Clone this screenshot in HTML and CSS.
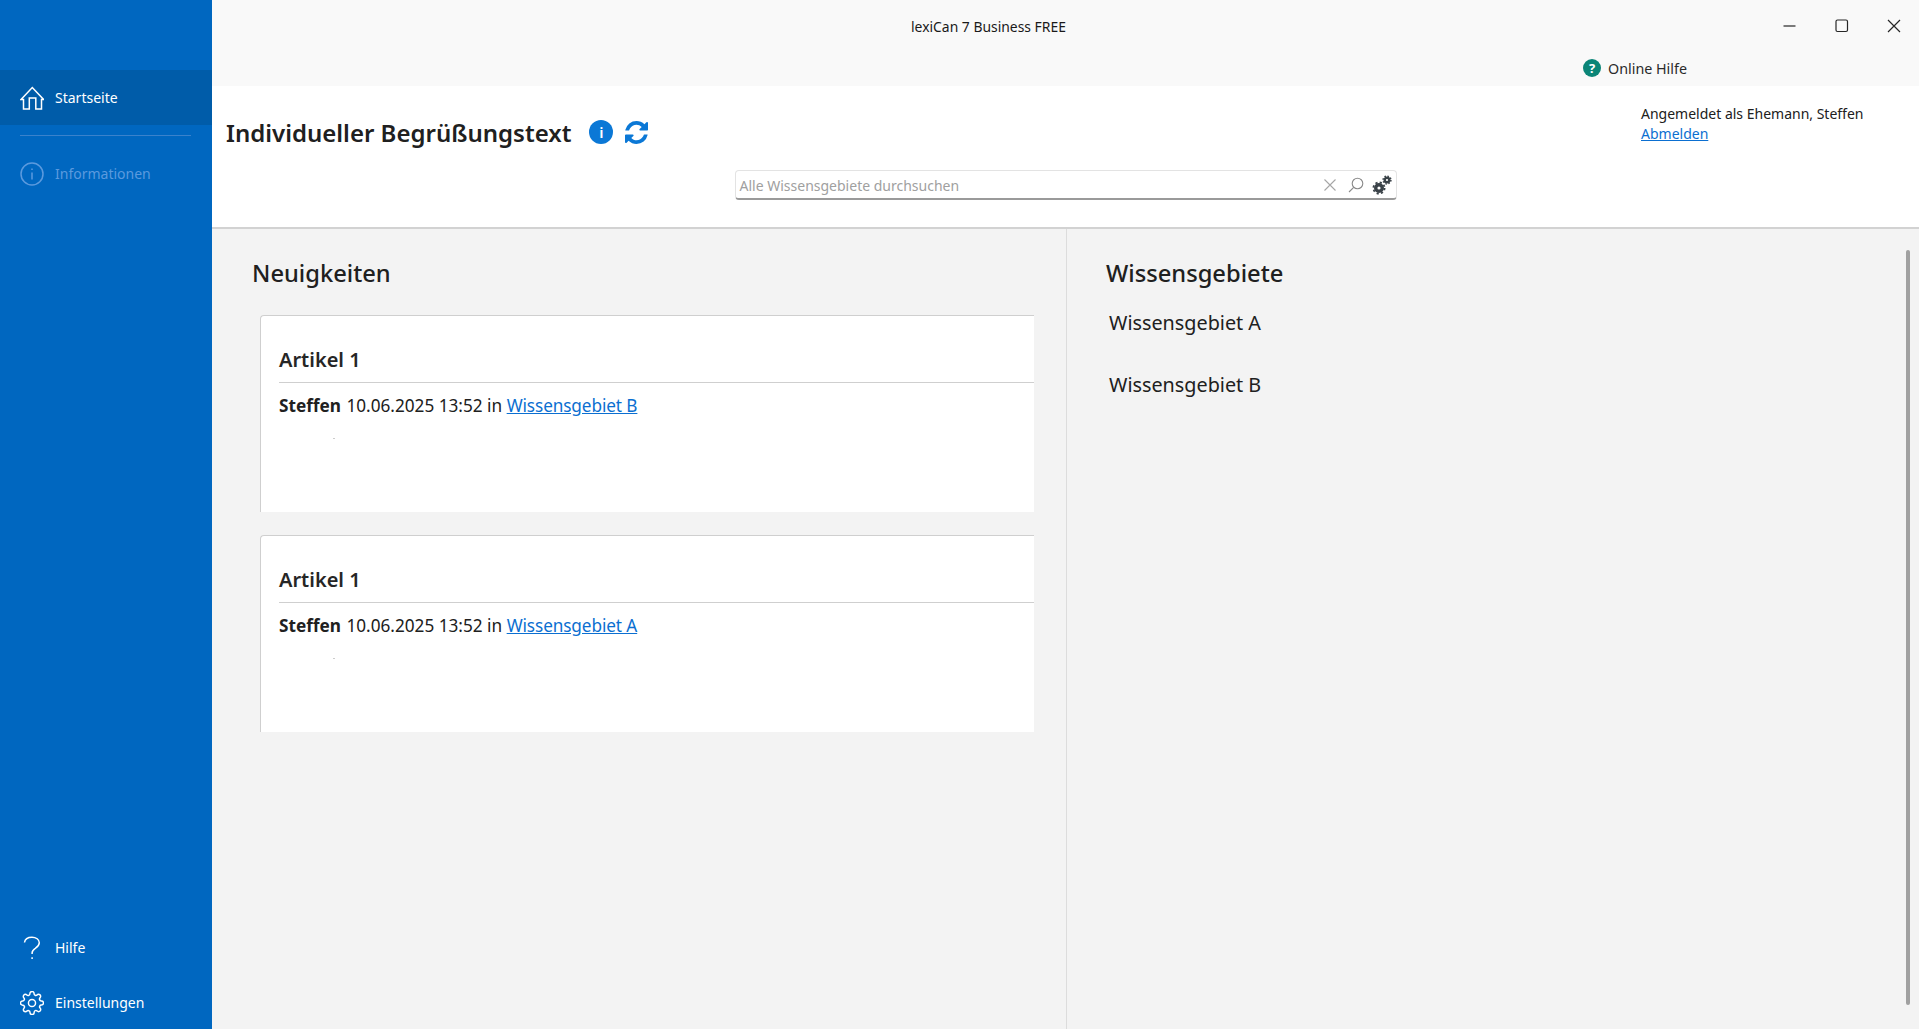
FILE: index.html
```html
<!DOCTYPE html>
<html lang="de">
<head>
<meta charset="utf-8">
<title>lexiCan 7 Business FREE</title>
<link rel="stylesheet" href="styles.css">
</head>
<body>
<div class="app">
  <aside class="sidebar">
    <nav class="nav-top">
      <a class="nav-item active">
        <svg class="nav-icon" viewBox="0 0 24 24"><path d="M1 13.500 12.300 1.500 23.600 13.500H21.500V23H15.800V12H9.300V23H3.500V13.500z"/></svg>
        <span>Startseite</span>
      </a>
      <div class="nav-divider"></div>
      <a class="nav-item disabled">
        <svg class="nav-icon" viewBox="0 0 24 24"><circle cx="12" cy="12" r="11"/><path d="M12 10.5v7M12 6.5v1.6"/></svg>
        <span>Informationen</span>
      </a>
    </nav>
    <nav class="nav-bottom">
      <a class="nav-item">
        <svg class="nav-icon" viewBox="0 0 24 24"><path d="M4.500 6.500C5 3 8 1.200 12 1.200c4 0 7.300 2.300 7.300 5.600 0 2.800-1.900 4.100-4 5.500-2.100 1.300-3.200 2.600-3.200 4.700v1"/><path d="M12.100 21.300v1.700"/></svg>
        <span>Hilfe</span>
      </a>
      <a class="nav-item">
        <svg class="nav-icon gear-icon" viewBox="0.500 0.500 23 23"><circle cx="12" cy="12" r="3.400"/><path d="M19.400 15a1.650 1.650 0 0 0 .33 1.820l.06.06a2 2 0 0 1 0 2.830 2 2 0 0 1-2.830 0l-.06-.06a1.650 1.650 0 0 0-1.820-.33 1.650 1.650 0 0 0-1 1.510V21a2 2 0 0 1-2 2 2 2 0 0 1-2-2v-.09A1.650 1.650 0 0 0 9 19.400a1.650 1.650 0 0 0-1.820.33l-.06.06a2 2 0 0 1-2.830 0 2 2 0 0 1 0-2.830l.06-.06a1.650 1.650 0 0 0 .33-1.820 1.650 1.650 0 0 0-1.510-1H3a2 2 0 0 1-2-2 2 2 0 0 1 2-2h.09A1.650 1.650 0 0 0 4.600 9a1.650 1.650 0 0 0-.33-1.820l-.06-.06a2 2 0 0 1 0-2.830 2 2 0 0 1 2.830 0l.06.06a1.650 1.650 0 0 0 1.820.33H9a1.650 1.650 0 0 0 1-1.510V3a2 2 0 0 1 2-2 2 2 0 0 1 2 2v.09a1.650 1.650 0 0 0 1 1.510 1.650 1.650 0 0 0 1.820-.33l.06-.06a2 2 0 0 1 2.830 0 2 2 0 0 1 0 2.830l-.06.06a1.650 1.650 0 0 0-.33 1.820V9a1.650 1.650 0 0 0 1.510 1H21a2 2 0 0 1 2 2 2 2 0 0 1-2 2h-.09a1.650 1.650 0 0 0-1.510 1z"/></svg>
        <span>Einstellungen</span>
      </a>
    </nav>
  </aside>
  <main class="main">
    <div class="titlebar">
      <div class="title-row">
        <div class="app-title">lexiCan 7 Business FREE</div>
        <div class="window-controls">
          <svg class="win-icon" viewBox="0 0 14 14"><path d="M0.500 7h12"/></svg>
          <svg class="win-icon" viewBox="0 0 14 14"><rect x="1" y="1" width="11.500" height="11.500" rx="1.500"/></svg>
          <svg class="win-icon" viewBox="0 0 14 14"><path d="M1 1l12 12M13 1 1 13"/></svg>
        </div>
      </div>
      <div class="help-row">
        <span class="help-badge">?</span>
        <span class="help-text">Online Hilfe</span>
      </div>
    </div>
    <header class="header">
      <div class="header-top">
        <div class="heading-group">
          <h1 class="page-title">Individueller Begrüßungstext</h1>
          <span class="info-badge">i</span>
          <svg class="refresh-icon" viewBox="0 0 1536 1536"><path d="M1511 928q0 5-1 7-64 268-268 434.500t-478 166.500q-146 0-282.500-55t-243.500-157l-129 129q-19 19-45 19t-45-19-19-45v-448q0-26 19-45t45-19h448q26 0 45 19t19 45-19 45l-137 137q71 66 161 102t187 36q134 0 250-65t186-179q11-17 53-117 8-23 30-23h192q13 0 22.500 9.500t9.500 22.500zm25-800v448q0 26-19 45t-45 19h-448q-26 0-45-19t-19-45 19-45l138-138q-148-137-349-137-134 0-250 65t-186 179q-11 17-53 117-8 23-30 23h-199q-13 0-22.500-9.500t-9.500-22.500v-7q65-268 270-434.500t480-166.500q146 0 284 55.500t245 156.500l130-129q19-19 45-19t45 19 19 45z"/></svg>
        </div>
        <div class="user-info">
          <div>Angemeldet als Ehemann, Steffen</div>
          <a class="link">Abmelden</a>
        </div>
      </div>
      <div class="search">
        <span class="search-placeholder">Alle Wissensgebiete durchsuchen</span>
        <svg class="search-clear" viewBox="0 0 14 14"><path d="M1.500 1.500l11 11M12.500 1.500l-11 11"/></svg>
        <svg class="search-glass" viewBox="0 0 16 16"><circle cx="9.500" cy="6.500" r="5.300"/><path d="M5.700 10.300 1 15"/></svg>
        <svg class="search-gears" viewBox="0 0 20 20">
          <circle class="gear-ring" cx="7" cy="13" r="3.300"/>
          <circle class="gear-teeth big" cx="7" cy="13" r="5.600"/>
          <circle class="gear-ring small" cx="15" cy="5" r="2.300"/>
          <circle class="gear-teeth little" cx="15" cy="5" r="3.900"/>
        </svg>
      </div>
    </header>
    <div class="content">
      <section class="news">
        <h2 class="section-title">Neuigkeiten</h2>
        <article class="card">
          <h3 class="card-title">Artikel 1</h3>
          <p class="card-meta"><strong>Steffen</strong> 10.06.2025 13:52 in <a class="link">Wissensgebiet B</a></p>
          <div class="speck"></div>
        </article>
        <article class="card">
          <h3 class="card-title">Artikel 1</h3>
          <p class="card-meta"><strong>Steffen</strong> 10.06.2025 13:52 in <a class="link">Wissensgebiet A</a></p>
          <div class="speck"></div>
        </article>
      </section>
      <section class="areas">
        <h2 class="section-title">Wissensgebiete</h2>
        <div class="area">Wissensgebiet A</div>
        <div class="area">Wissensgebiet B</div>
      </section>
      <div class="scrollbar"></div>
    </div>
  </main>
</div>
</body>
</html>
```
FILE: styles.css
```css
* { box-sizing: border-box; }
html, body { margin: 0; height: 100%; }
body {
  font-family: "Noto Sans", "Open Sans", sans-serif;
  color: #202020;
  overflow: hidden;
}
.app { display: flex; height: 1029px; }

.sidebar {
  width: 212px;
  flex: none;
  background: #0067c0;
  color: #fff;
  display: flex;
  flex-direction: column;
  justify-content: space-between;
  padding: 70px 0 0;
}
.nav-item {
  display: flex;
  align-items: center;
  gap: 11px;
  height: 55px;
  padding-left: 20px;
  font-size: 14px;
}
.nav-item.active { background: #005ca9; }
.nav-item.disabled { color: #5b9ade; margin-top: 10px; }
.nav-divider { height: 1px; margin: 10px 21px 0 20px; background: #3a82cc; }
.nav-icon {
  width: 24px; height: 24px; flex: none;
  fill: none; stroke: currentColor; stroke-width: 1.500;
}
.gear-icon { stroke-width: 1.400; }
.nav-bottom { display: flex; flex-direction: column; margin-bottom: -1px; }

.main { flex: 1; display: flex; flex-direction: column; min-width: 0; }

.titlebar { height: 86px; background: #f9f9f9; flex: none; }
.title-row { display: flex; height: 52px; }
.app-title {
  flex: 1;
  padding: 17px 0 0 699px;
  font-size: 13.9px;
  color: #1a1a1a;
}
.window-controls { display: flex; gap: 38px; padding: 19px 18px 0 0; }
.win-icon { width: 14px; height: 14px; fill: none; stroke: #262626; stroke-width: 1.200; }
.help-row {
  display: flex;
  align-items: center;
  gap: 7px;
  padding-left: 1371px;
  height: 34px;
  margin-top: -1px;
  font-size: 14.3px;
  color: #2a2a2a;
}
.help-badge {
  width: 18px; height: 18px; border-radius: 50%;
  background: #0b8577; color: #fff;
  font-size: 13px; font-weight: 700;
  display: flex; align-items: center; justify-content: center;
}

.header {
  height: 143px;
  flex: none;
  background: #fff;
  border-bottom: 2px solid #d2d2d2;
}
.header-top { display: flex; justify-content: space-between; height: 84px; }
.heading-group { display: flex; align-items: center; height: 84px; padding: 8px 0 0 14px; }
.page-title { margin: 0; font-size: 24px; font-weight: 600; color: #202020; }
.info-badge {
  width: 24px; height: 24px; border-radius: 50%;
  margin-left: 18px;
  background: #0b78d6; color: #fff;
  font-size: 15px; font-weight: 600;
  display: flex; align-items: center; justify-content: center;
}
.refresh-icon { width: 23px; height: 23px; margin-left: 12px; fill: #0b78d6; }
.user-info {
  width: 278px;
  padding-top: 18px;
  font-size: 14px;
  line-height: 20px;
  color: #202020;
}
.link { color: #0b6fd1; text-decoration: underline; }

.search {
  width: 662px;
  height: 30px;
  margin: 0 auto;
  display: flex;
  align-items: center;
  padding: 0 4px 0 4px;
  background: #fff;
  border: 1px solid #e3e3e3;
  border-bottom: 2px solid #9a9a9a;
  border-radius: 4px;
}
.search-placeholder { flex: 1; padding-top: 1px; font-size: 14px; color: #a0a0a0; }
.search-clear { width: 14px; height: 14px; fill: none; stroke: #a6a6a6; stroke-width: 1.100; }
.search-glass { width: 16px; height: 16px; margin-left: 11px; fill: none; stroke: #8a8a8a; stroke-width: 1.100; }
.search-gears { width: 20px; height: 20px; margin-left: 8px; fill: none; stroke: #3a4248; }
.gear-ring { stroke-width: 3.400; }
.gear-ring.small { stroke-width: 2.400; }
.gear-teeth.big { stroke-width: 1.800; stroke-dasharray: 2.200 2.200; }
.gear-teeth.little { stroke-width: 1.500; stroke-dasharray: 1.500 1.560; }

.content { flex: 1; display: flex; background: #f3f3f3; min-height: 0; }
.news { width: 855px; flex: none; border-right: 1px solid #dcdcdc; padding: 27px 32px 0 40px; }
.section-title { margin: 0; font-size: 23.7px; font-weight: 500; line-height: 34px; color: #202020; }
.card {
  margin: 25px 0 23px 8px;
  height: 197px;
  background: #fff;
  border-top: 1px solid #cfcfcf;
  border-left: 1px solid #cfcfcf;
  border-top-left-radius: 4px;
  padding-left: 18px;
}
.card + .card { margin-top: 0; }
.card-title { margin: 0; padding-top: 30px; height: 67px; font-size: 20px; font-weight: 600; line-height: 28px; border-bottom: 1px solid #cfcfcf; color: #262626; }
.card-meta { margin: 10px 0 0; font-size: 17.2px; line-height: 26px; }
.card-meta strong { font-weight: 700; margin-right: 1px; }
.card-meta .link { letter-spacing: -0.1px; }
.speck { width: 2px; height: 1px; margin: 19px 0 0 54px; background: #ccc; }

.areas { flex: 1; padding: 27px 0 0 39px; }
.area { margin: 18px 0 32px 3px; font-size: 19.8px; line-height: 30px; }
.area + .area { margin-top: 0; }

.scrollbar { width: 4px; flex: none; margin: 21px 9px 24px 0; background: #a0a0a0; border-radius: 2px; }
```
